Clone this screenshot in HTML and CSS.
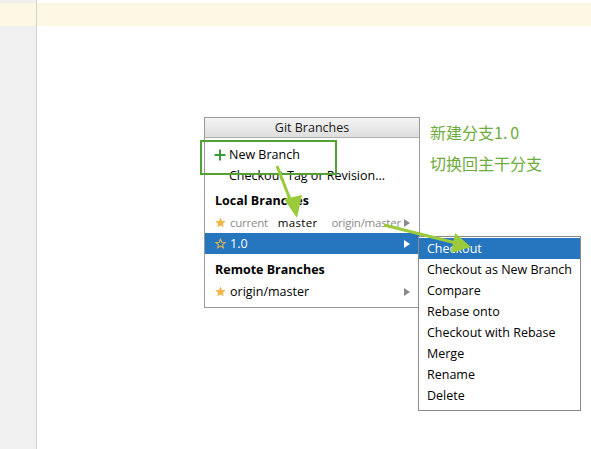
FILE: index.html
```html
<!DOCTYPE html>
<html>
<head>
<meta charset="utf-8">
<link rel="stylesheet" href="styles.css">
</head>
<body>
<div class="ide">
  <div class="gutter"><div class="gutter-hl"></div></div>
  <div class="editor"><div class="line-hl"></div></div>
</div>

<div class="popup">
  <div class="popup-title">Git Branches</div>
  <div class="popup-body">
    <div class="row"><svg class="icon plus" width="12" height="12" viewBox="0 0 12 12"><path d="M6 0.5V11.5M0.5 6H11.5" stroke="#3d9b3d" stroke-width="2"/></svg><span class="lbl">New Branch</span></div>
    <div class="row"><span class="icon"></span><span class="lbl">Checkout Tag or Revision...</span></div>
    <div class="heading">Local Branches</div>
    <div class="row compact">
      <svg class="icon" width="11" height="11" viewBox="0 0 12 12"><path d="M6 0.5L7.6 4.3L11.7 4.6L8.6 7.3L9.5 11.3L6 9.2L2.5 11.3L3.4 7.3L0.3 4.6L4.4 4.3Z" fill="#f5b547"/></svg>
      <span class="lbl muted">current</span><span class="lbl strong">master</span><span class="lbl muted remote">origin/master</span>
      <span class="tri"></span>
    </div>
    <div class="row selected">
      <svg class="icon" width="11" height="11" viewBox="0 0 12 12"><path d="M6 1.2L7.4 4.6L11 4.9L8.3 7.2L9.1 10.7L6 8.8L2.9 10.7L3.7 7.2L1 4.9L4.6 4.6Z" fill="none" stroke="#e0b451" stroke-width="1.2"/></svg>
      <span class="lbl">1.0</span>
      <span class="tri white"></span>
    </div>
    <div class="heading h2">Remote Branches</div>
    <div class="row">
      <svg class="icon" width="11" height="11" viewBox="0 0 12 12"><path d="M6 0.5L7.6 4.3L11.7 4.6L8.6 7.3L9.5 11.3L6 9.2L2.5 11.3L3.4 7.3L0.3 4.6L4.4 4.3Z" fill="#f5b547"/></svg>
      <span class="lbl">origin/master</span>
      <span class="tri"></span>
    </div>
  </div>
</div>

<div class="submenu">
  <div class="sub-item selected">Checkout</div>
  <div class="sub-item">Checkout as New Branch</div>
  <div class="sub-item">Compare</div>
  <div class="sub-item">Rebase onto</div>
  <div class="sub-item">Checkout with Rebase</div>
  <div class="sub-item">Merge</div>
  <div class="sub-item">Rename</div>
  <div class="sub-item">Delete</div>
</div>

<div class="notes">
  <div class="note">新建分支1<span class="dot">.</span>0</div>
  <div class="note">切换回主干分支</div>
</div>

<div class="callout"></div>

<svg class="arrows" width="591" height="449" viewBox="0 0 591 449">
  <line x1="277" y1="166" x2="291" y2="202" stroke="#9bcb3b" stroke-width="3"/>
  <polygon points="297,218 284,199 302,195" fill="#9bcb3b"/>
  <line x1="384" y1="225" x2="456" y2="243" stroke="#9bcb3b" stroke-width="3"/>
  <polygon points="471,247 455,233 451,253" fill="#9bcb3b"/>
</svg>
</body>
</html>
```
FILE: styles.css
```css
html, body {
  margin: 0;
  padding: 0;
  background: #ffffff;
}
body {
  width: 591px;
  height: 449px;
  overflow: hidden;
  position: relative;
  font-family: "Open Sans", "Noto Sans", "Noto Sans CJK SC", sans-serif;
  font-size: 12.5px;
  color: #000;
}
.ide {
  display: flex;
  height: 449px;
}
.gutter {
  width: 36px;
  background: #f0f0f0;
  border-right: 1px solid #d2d2d2;
}
.gutter-hl, .line-hl {
  margin-top: 3px;
  height: 23px;
  background: #fdf8e4;
}
.editor {
  flex: 1;
  background: #ffffff;
}

/* main popup */
.popup {
  position: absolute;
  left: 204px;
  top: 117px;
  width: 214px;
  background: #ffffff;
  border: 1px solid #9a9a9a;
}
.popup-title {
  height: 19px;
  line-height: 19px;
  text-align: center;
  color: #1a1a1a;
  background: linear-gradient(#f4f4f4, #dedede);
  border-bottom: 1px solid #b0b0b0;
}
.popup-body {
  padding: 6px 0 5px 0;
}
.row {
  display: flex;
  align-items: center;
  height: 21px;
  padding-left: 9px;
  position: relative;
}
.row.compact { font-size: 11.5px; letter-spacing: -0.25px; }
.row .icon {
  width: 12px;
  height: 12px;
  margin-right: 3px;
  flex: none;
}
.row svg.icon { width: 11px; height: 11px; margin-right: 4px; margin-left: 1px; }
.row svg.plus { width: 12px; height: 12px; margin-right: 3px; margin-left: 0; }
.lbl { white-space: nowrap; }
.muted { color: #8c8c8c; }
.strong { color: #000; margin-left: 10px; letter-spacing: 0.3px; }
.remote { margin-left: 14px; }
.heading {
  margin-top: 4px;
  height: 22px;
  line-height: 21px;
  padding-left: 10px;
  font-weight: bold;
}
.heading.h2 { margin-top: 5px; }
.row.selected {
  background: #2675bf;
  color: #ffffff;
}
.tri {
  position: absolute;
  right: 9px;
  top: 7px;
  width: 0;
  height: 0;
  border-top: 4px solid transparent;
  border-bottom: 4px solid transparent;
  border-left: 6px solid #8a8a8a;
}
.tri.white { border-left-color: #ffffff; }

/* submenu */
.submenu {
  position: absolute;
  left: 418px;
  top: 236px;
  width: 161px;
  background: #ffffff;
  border: 1px solid #8a8a8a;
  padding: 1px 0 4px 0;
}
.sub-item {
  height: 21px;
  line-height: 21px;
  padding-left: 8px;
  white-space: nowrap;
}
.sub-item.selected {
  background: #2675bf;
  color: #ffffff;
}

/* annotations */
.notes {
  position: absolute;
  left: 430px;
  top: 121px;
  display: flex;
  flex-direction: column;
  gap: 9px;
  font-family: "Noto Sans CJK SC", sans-serif;
  font-size: 16px;
  line-height: 22px;
  color: #6cab3c;
}
.dot { margin-right: 3px; }
.callout {
  position: absolute;
  left: 200px;
  top: 140px;
  width: 133px;
  height: 31px;
  border: 2px solid #55a035;
}
.arrows {
  position: absolute;
  left: 0;
  top: 0;
  pointer-events: none;
}
```
